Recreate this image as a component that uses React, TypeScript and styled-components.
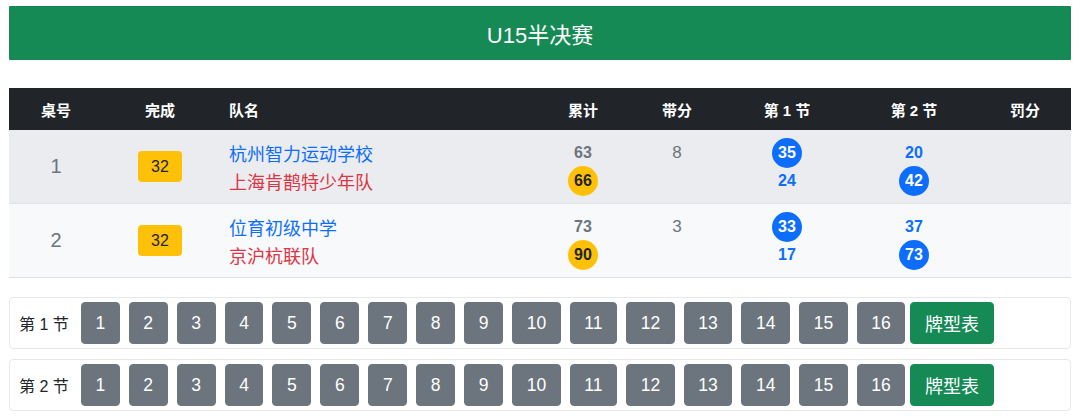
import styled, { createGlobalStyle } from "styled-components";

const Global = createGlobalStyle`
  body {
    margin: 0;
    background: #fff;
    font-family: "Liberation Sans", "Noto Sans CJK SC", sans-serif;
    color: #212529;
  }
`;

const Page = styled.div`
  padding: 6px 9px;
  display: flex;
  flex-direction: column;
`;

const TitleBar = styled.div`
  height: 54px;
  background: #158a55;
  color: #fff;
  font-size: 22px;
  display: flex;
  align-items: center;
  justify-content: center;
  border-radius: 1px;
`;

const Table = styled.table`
  margin-top: 28px;
  width: 100%;
  border-collapse: collapse;
  table-layout: fixed;
`;

const Th = styled.th<{ $left?: boolean }>`
  background: #212529;
  color: #fff;
  height: 42px;
  padding: 0;
  font-size: 15px;
  font-weight: bold;
  text-align: ${(p) => (p.$left ? "left" : "center")};
  padding-left: ${(p) => (p.$left ? "12px" : "0")};
`;

const Tr = styled.tr<{ $odd: boolean }>`
  background: ${(p) => (p.$odd ? "#eaecef" : "#f8f9fa")};
  border-bottom: 1px solid #dee2e6;
`;

const Td = styled.td<{ $left?: boolean }>`
  height: 73px;
  padding: 0;
  vertical-align: middle;
  text-align: ${(p) => (p.$left ? "left" : "center")};
  padding-left: ${(p) => (p.$left ? "12px" : "0")};
`;

const TableNo = styled.span`
  font-size: 20px;
  color: #6c757d;
`;

const Badge = styled.span`
  display: inline-flex;
  align-items: center;
  justify-content: center;
  width: 44px;
  height: 31px;
  border-radius: 4px;
  background: #ffc107;
  color: #212529;
  font-size: 16px;
`;

const Stack = styled.div<{ $left?: boolean }>`
  display: flex;
  flex-direction: column;
  align-items: ${(p) => (p.$left ? "flex-start" : "center")};
`;

const Line = styled.div<{ $color: string; $bold?: boolean; $size?: number }>`
  height: 28px;
  display: flex;
  align-items: center;
  color: ${(p) => p.$color};
  font-weight: ${(p) => (p.$bold ? "bold" : "normal")};
  font-size: ${(p) => p.$size ?? 16}px;
`;

const Circle = styled.span<{ $bg: string; $fg: string }>`
  width: 30px;
  height: 30px;
  margin: -1px 0;
  border-radius: 50%;
  background: ${(p) => p.$bg};
  color: ${(p) => p.$fg};
  display: inline-flex;
  align-items: center;
  justify-content: center;
  font-weight: bold;
  font-size: 16px;
`;

const Panel = styled.div<{ $first?: boolean }>`
  margin-top: ${(p) => (p.$first ? "19px" : "10px")};
  border: 1px solid #e6e9ec;
  border-radius: 4px;
  padding: 4px 9px;
  display: flex;
  align-items: center;
`;

const Label = styled.span`
  font-size: 16px;
  color: #212529;
  margin-right: 12px;
  white-space: pre;
`;

const NumBtn = styled.span`
  height: 42px;
  box-sizing: border-box;
  padding: 0 13.6px;
  border: 1px solid #6c757d;
  border-radius: 4px;
  background: #6c757d;
  color: #fff;
  font-size: 17.5px;
  display: inline-flex;
  align-items: center;
  justify-content: center;
  margin-right: 9px;
`;

const SheetBtn = styled(NumBtn)`
  background: #158a55;
  border-color: #158a55;
  font-size: 18px;
  margin-left: -4px;
`;

type Team = { name: string; color: string };
type Row = {
  no: number;
  done: number;
  teams: [Team, Team];
  total: [string, string];
  win: 0 | 1;
  carry: string;
  s1: [string, string];
  s1win: 0 | 1;
  s2: [string, string];
  s2win: 0 | 1;
};

const rows: Row[] = [
  {
    no: 1,
    done: 32,
    teams: [
      { name: "杭州智力运动学校", color: "#0d6efd" },
      { name: "上海肯鹊特少年队", color: "#dc3545" },
    ],
    total: ["63", "66"],
    win: 1,
    carry: "8",
    s1: ["35", "24"],
    s1win: 0,
    s2: ["20", "42"],
    s2win: 1,
  },
  {
    no: 2,
    done: 32,
    teams: [
      { name: "位育初级中学", color: "#0d6efd" },
      { name: "京沪杭联队", color: "#dc3545" },
    ],
    total: ["73", "90"],
    win: 1,
    carry: "3",
    s1: ["33", "17"],
    s1win: 0,
    s2: ["37", "73"],
    s2win: 1,
  },
];

const ScorePair = ({
  vals,
  win,
  color,
  bg,
  fg,
}: {
  vals: [string, string];
  win: 0 | 1;
  color: string;
  bg: string;
  fg: string;
}) => (
  <Stack>
    {vals.map((v, i) => (
      <Line key={i} $color={color} $bold>
        {i === win ? (
          <Circle $bg={bg} $fg={fg}>
            {v}
          </Circle>
        ) : (
          v
        )}
      </Line>
    ))}
  </Stack>
);

const nums = Array.from({ length: 16 }, (_, i) => i + 1);

export default function App() {
  return (
    <Page>
      <Global />
      <TitleBar>U15半决赛</TitleBar>
      <Table>
        <colgroup>
          <col style={{ width: 94 }} />
          <col style={{ width: 114 }} />
          <col style={{ width: 320 }} />
          <col style={{ width: 92 }} />
          <col style={{ width: 96 }} />
          <col style={{ width: 124 }} />
          <col style={{ width: 130 }} />
          <col style={{ width: 92 }} />
        </colgroup>
        <thead>
          <tr>
            <Th>桌号</Th>
            <Th>完成</Th>
            <Th $left>队名</Th>
            <Th>累计</Th>
            <Th>带分</Th>
            <Th>第 1 节</Th>
            <Th>第 2 节</Th>
            <Th>罚分</Th>
          </tr>
        </thead>
        <tbody>
          {rows.map((r, idx) => (
            <Tr key={r.no} $odd={idx % 2 === 0}>
              <Td>
                <TableNo>{r.no}</TableNo>
              </Td>
              <Td>
                <Badge>{r.done}</Badge>
              </Td>
              <Td $left>
                <Stack $left>
                  {r.teams.map((t) => (
                    <Line key={t.name} $color={t.color} $size={18}>
                      {t.name}
                    </Line>
                  ))}
                </Stack>
              </Td>
              <Td>
                <ScorePair vals={r.total} win={r.win} color="#6c757d" bg="#ffc107" fg="#212529" />
              </Td>
              <Td>
                <Stack>
                  <Line $color="#6c757d" $size={17}>
                    {r.carry}
                  </Line>
                  <Line $color="#6c757d" />
                </Stack>
              </Td>
              <Td>
                <ScorePair vals={r.s1} win={r.s1win} color="#0d6efd" bg="#0d6efd" fg="#fff" />
              </Td>
              <Td>
                <ScorePair vals={r.s2} win={r.s2win} color="#0d6efd" bg="#0d6efd" fg="#fff" />
              </Td>
              <Td />
            </Tr>
          ))}
        </tbody>
      </Table>
      {[1, 2].map((s) => (
        <Panel key={s} $first={s === 1}>
          <Label>{`第 ${s} 节`}</Label>
          {nums.map((n) => (
            <NumBtn key={n}>{n}</NumBtn>
          ))}
          <SheetBtn>牌型表</SheetBtn>
        </Panel>
      ))}
    </Page>
  );
}
